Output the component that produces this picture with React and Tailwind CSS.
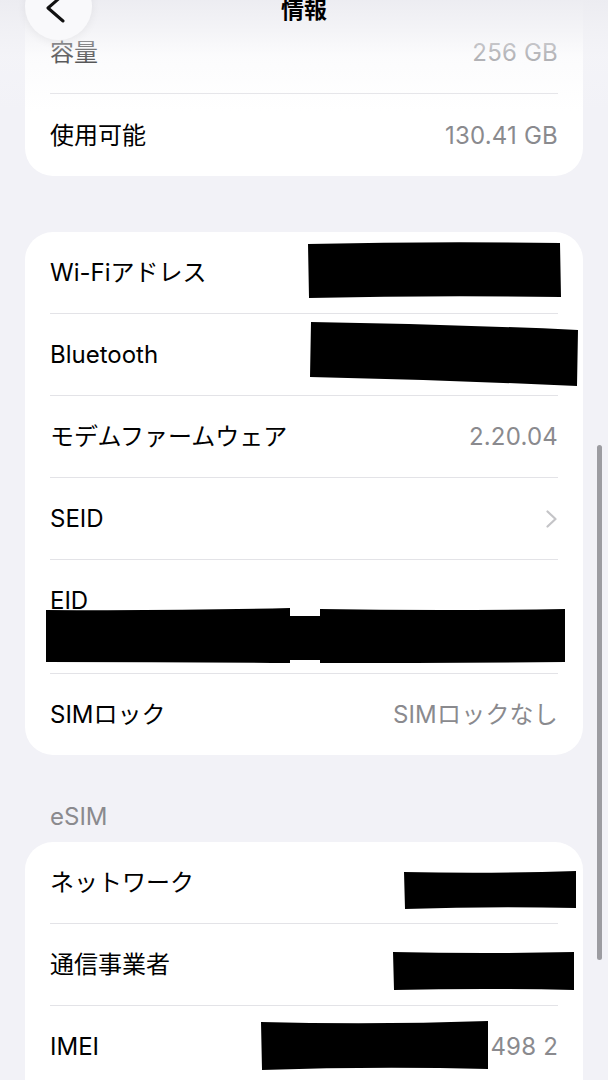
const font = { fontFamily: 'Inter, "Noto Sans CJK JP", sans-serif' }

function Chevron() {
  return (
    <svg width="14" height="18" viewBox="0 0 14 18" className="mr-[-1px]">
      <path d="M2.5,1.5 L10.5,9 L2.5,16.5" fill="none" stroke="#c4c4c7" strokeWidth="2.2" strokeLinecap="round" strokeLinejoin="round" />
    </svg>
  )
}

function Row({ label, value, chevron, className = 'h-[81px]' }) {
  return (
    <div className={`flex items-center justify-between px-[25px] ${className}`}>
      <span className="text-[24px] leading-[29px] text-black">{label}</span>
      {value && <span className="text-[24px] leading-[29px] tracking-[0.2px] text-[#8a8a8e]">{value}</span>}
      {chevron && <Chevron />}
    </div>
  )
}

function Divider() {
  return <div className="mx-[25px] h-px bg-[#e3e3e7]" />
}

function Redactions() {
  return (
    <svg className="pointer-events-none absolute left-0 top-0" width="608" height="1080" viewBox="0 0 608 1080">
      <g fill="#000">
        <path d="M308,244 Q434,241 560,243 L561,297 Q434,295 309,298 Z" />
        <path d="M311,322 Q445,324 578,330 L577,386 Q444,380 310,377 Z" />
        <path d="M46,610 Q170,611 290,608 L290,616 L320,616 L320,609 Q440,611 565,609 L565,662 Q440,663 320,663 L320,660 L290,660 L290,663 Q170,662 46,662 Z" />
        <path d="M404,872 Q490,874 576,871 L576,908 Q490,906 405,909 Z" />
        <path d="M393,952 Q484,954 574,952 L574,990 Q484,988 394,990 Z" />
        <path d="M261,1022 Q375,1025 488,1021 L488,1069 Q375,1066 262,1070 Z" />
      </g>
    </svg>
  )
}

export default function App() {
  return (
    <div className="relative h-[1080px] w-[608px] overflow-hidden bg-[#f2f2f7]" style={font}>
      <div className="flex flex-col px-[25px]">
        <div className="rounded-b-[28px] bg-white">
          <Row label="容量" value="256 GB" className="h-[93px] pt-[12px]" />
          <Divider />
          <Row label="使用可能" value="130.41 GB" className="h-[82px]" />
        </div>

        <div className="mt-[56px] rounded-[28px] bg-white">
          <Row label="Wi-Fiアドレス" />
          <Divider />
          <Row label="Bluetooth" />
          <Divider />
          <Row label="モデムファームウェア" value="2.20.04" />
          <Divider />
          <Row label="SEID" chevron />
          <Divider />
          <div className="h-[113px] px-[25px] pt-[26px]">
            <span className="text-[24px] leading-[29px] text-black">EID</span>
          </div>
          <Divider />
          <Row label="SIMロック" value="SIMロックなし" />
        </div>

        <div className="px-[25px] pb-[11px] pt-[47px] text-[24px] leading-[29px] text-[#8a8a8e]">eSIM</div>

        <div className="rounded-t-[28px] bg-white">
          <Row label="ネットワーク" />
          <Divider />
          <Row label="通信事業者" />
          <Divider />
          <Row label="IMEI" value="498 2" />
        </div>
      </div>

      <Redactions />

      {/* nav bar fade */}
      <div className="pointer-events-none absolute left-0 top-0 h-[112px] w-full bg-[linear-gradient(180deg,rgba(236,236,241,0.96)_0%,rgba(240,240,244,0.78)_25%,rgba(246,246,249,0.4)_50%,rgba(255,255,255,0)_100%)]" />

      <div className="absolute left-[25px] top-[-27px] h-[67px] w-[67px] rounded-full bg-[#f9f9fb] shadow-[0_2px_10px_rgba(0,0,0,0.06)]">
        <svg width="67" height="67" viewBox="0 0 67 67" className="absolute left-0 top-0">
          <path d="M38,22 L23,35 L38,48" fill="none" stroke="#111" strokeWidth="3" strokeLinecap="round" strokeLinejoin="round" />
        </svg>
      </div>

      <div className="absolute left-0 top-[-1px] w-full text-center text-[23px] font-bold leading-[23px] text-black">情報</div>

      <div className="absolute left-[597px] top-[445px] h-[515px] w-[5px] rounded-full bg-[#9c9ca1]" />
    </div>
  )
}
